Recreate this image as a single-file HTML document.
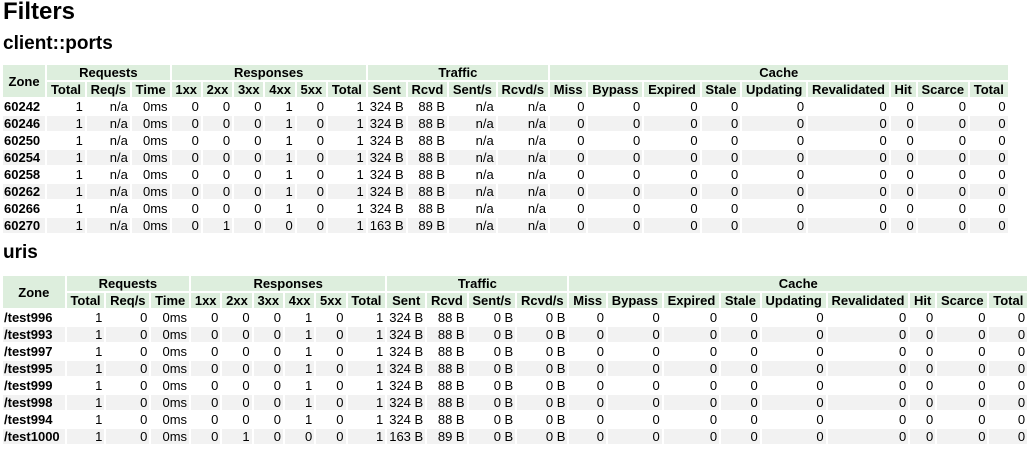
<!DOCTYPE html>
<html><head><meta charset="utf-8"><style>
body{margin:0 3px;font-family:"Liberation Sans",Arial,sans-serif;font-size:13px;color:#000;background:#fff}
h1{font-size:24px;line-height:24px;margin:0;font-weight:bold}
h2{font-size:19px;line-height:24px;margin:8px 0 0;font-weight:bold}
h2.u{margin-top:6px}
table{border-spacing:2px;margin:7px 0 0 -2px}
table.t2{margin-top:9px}
th,td{height:15px;line-height:15px;padding:0 2px;white-space:nowrap}
th{background:#ddeedd;padding:0 3.8px;font-weight:bold}
td{text-align:right}
td:first-child{text-align:left;font-weight:bold;padding-left:1px;padding-right:5px}
tbody tr:nth-child(even) td{background:#f2f2f2}
</style></head><body>
<h1>Filters</h1>
<h2>client::ports</h2>
<table>
<thead><tr><th rowspan="2">Zone</th><th colspan="3">Requests</th><th colspan="6">Responses</th><th colspan="4">Traffic</th><th colspan="9">Cache</th></tr>
<tr><th>Total</th><th>Req/s</th><th>Time</th><th>1xx</th><th>2xx</th><th>3xx</th><th>4xx</th><th>5xx</th><th>Total</th><th>Sent</th><th>Rcvd</th><th>Sent/s</th><th>Rcvd/s</th><th>Miss</th><th>Bypass</th><th>Expired</th><th>Stale</th><th>Updating</th><th>Revalidated</th><th>Hit</th><th>Scarce</th><th>Total</th></tr></thead>
<tbody>
<tr><td>60242</td><td>1</td><td>n/a</td><td>0ms</td><td>0</td><td>0</td><td>0</td><td>1</td><td>0</td><td>1</td><td>324 B</td><td>88 B</td><td>n/a</td><td>n/a</td><td>0</td><td>0</td><td>0</td><td>0</td><td>0</td><td>0</td><td>0</td><td>0</td><td>0</td></tr>
<tr><td>60246</td><td>1</td><td>n/a</td><td>0ms</td><td>0</td><td>0</td><td>0</td><td>1</td><td>0</td><td>1</td><td>324 B</td><td>88 B</td><td>n/a</td><td>n/a</td><td>0</td><td>0</td><td>0</td><td>0</td><td>0</td><td>0</td><td>0</td><td>0</td><td>0</td></tr>
<tr><td>60250</td><td>1</td><td>n/a</td><td>0ms</td><td>0</td><td>0</td><td>0</td><td>1</td><td>0</td><td>1</td><td>324 B</td><td>88 B</td><td>n/a</td><td>n/a</td><td>0</td><td>0</td><td>0</td><td>0</td><td>0</td><td>0</td><td>0</td><td>0</td><td>0</td></tr>
<tr><td>60254</td><td>1</td><td>n/a</td><td>0ms</td><td>0</td><td>0</td><td>0</td><td>1</td><td>0</td><td>1</td><td>324 B</td><td>88 B</td><td>n/a</td><td>n/a</td><td>0</td><td>0</td><td>0</td><td>0</td><td>0</td><td>0</td><td>0</td><td>0</td><td>0</td></tr>
<tr><td>60258</td><td>1</td><td>n/a</td><td>0ms</td><td>0</td><td>0</td><td>0</td><td>1</td><td>0</td><td>1</td><td>324 B</td><td>88 B</td><td>n/a</td><td>n/a</td><td>0</td><td>0</td><td>0</td><td>0</td><td>0</td><td>0</td><td>0</td><td>0</td><td>0</td></tr>
<tr><td>60262</td><td>1</td><td>n/a</td><td>0ms</td><td>0</td><td>0</td><td>0</td><td>1</td><td>0</td><td>1</td><td>324 B</td><td>88 B</td><td>n/a</td><td>n/a</td><td>0</td><td>0</td><td>0</td><td>0</td><td>0</td><td>0</td><td>0</td><td>0</td><td>0</td></tr>
<tr><td>60266</td><td>1</td><td>n/a</td><td>0ms</td><td>0</td><td>0</td><td>0</td><td>1</td><td>0</td><td>1</td><td>324 B</td><td>88 B</td><td>n/a</td><td>n/a</td><td>0</td><td>0</td><td>0</td><td>0</td><td>0</td><td>0</td><td>0</td><td>0</td><td>0</td></tr>
<tr><td>60270</td><td>1</td><td>n/a</td><td>0ms</td><td>0</td><td>1</td><td>0</td><td>0</td><td>0</td><td>1</td><td>163 B</td><td>89 B</td><td>n/a</td><td>n/a</td><td>0</td><td>0</td><td>0</td><td>0</td><td>0</td><td>0</td><td>0</td><td>0</td><td>0</td></tr>
</tbody></table>
<h2 class="u">uris</h2>
<table class="t2">
<thead><tr><th rowspan="2">Zone</th><th colspan="3">Requests</th><th colspan="6">Responses</th><th colspan="4">Traffic</th><th colspan="9">Cache</th></tr>
<tr><th>Total</th><th>Req/s</th><th>Time</th><th>1xx</th><th>2xx</th><th>3xx</th><th>4xx</th><th>5xx</th><th>Total</th><th>Sent</th><th>Rcvd</th><th>Sent/s</th><th>Rcvd/s</th><th>Miss</th><th>Bypass</th><th>Expired</th><th>Stale</th><th>Updating</th><th>Revalidated</th><th>Hit</th><th>Scarce</th><th>Total</th></tr></thead>
<tbody>
<tr><td>/test996</td><td>1</td><td>0</td><td>0ms</td><td>0</td><td>0</td><td>0</td><td>1</td><td>0</td><td>1</td><td>324 B</td><td>88 B</td><td>0 B</td><td>0 B</td><td>0</td><td>0</td><td>0</td><td>0</td><td>0</td><td>0</td><td>0</td><td>0</td><td>0</td></tr>
<tr><td>/test993</td><td>1</td><td>0</td><td>0ms</td><td>0</td><td>0</td><td>0</td><td>1</td><td>0</td><td>1</td><td>324 B</td><td>88 B</td><td>0 B</td><td>0 B</td><td>0</td><td>0</td><td>0</td><td>0</td><td>0</td><td>0</td><td>0</td><td>0</td><td>0</td></tr>
<tr><td>/test997</td><td>1</td><td>0</td><td>0ms</td><td>0</td><td>0</td><td>0</td><td>1</td><td>0</td><td>1</td><td>324 B</td><td>88 B</td><td>0 B</td><td>0 B</td><td>0</td><td>0</td><td>0</td><td>0</td><td>0</td><td>0</td><td>0</td><td>0</td><td>0</td></tr>
<tr><td>/test995</td><td>1</td><td>0</td><td>0ms</td><td>0</td><td>0</td><td>0</td><td>1</td><td>0</td><td>1</td><td>324 B</td><td>88 B</td><td>0 B</td><td>0 B</td><td>0</td><td>0</td><td>0</td><td>0</td><td>0</td><td>0</td><td>0</td><td>0</td><td>0</td></tr>
<tr><td>/test999</td><td>1</td><td>0</td><td>0ms</td><td>0</td><td>0</td><td>0</td><td>1</td><td>0</td><td>1</td><td>324 B</td><td>88 B</td><td>0 B</td><td>0 B</td><td>0</td><td>0</td><td>0</td><td>0</td><td>0</td><td>0</td><td>0</td><td>0</td><td>0</td></tr>
<tr><td>/test998</td><td>1</td><td>0</td><td>0ms</td><td>0</td><td>0</td><td>0</td><td>1</td><td>0</td><td>1</td><td>324 B</td><td>88 B</td><td>0 B</td><td>0 B</td><td>0</td><td>0</td><td>0</td><td>0</td><td>0</td><td>0</td><td>0</td><td>0</td><td>0</td></tr>
<tr><td>/test994</td><td>1</td><td>0</td><td>0ms</td><td>0</td><td>0</td><td>0</td><td>1</td><td>0</td><td>1</td><td>324 B</td><td>88 B</td><td>0 B</td><td>0 B</td><td>0</td><td>0</td><td>0</td><td>0</td><td>0</td><td>0</td><td>0</td><td>0</td><td>0</td></tr>
<tr><td>/test1000</td><td>1</td><td>0</td><td>0ms</td><td>0</td><td>1</td><td>0</td><td>0</td><td>0</td><td>1</td><td>163 B</td><td>89 B</td><td>0 B</td><td>0 B</td><td>0</td><td>0</td><td>0</td><td>0</td><td>0</td><td>0</td><td>0</td><td>0</td><td>0</td></tr>
</tbody></table>
</body></html>
